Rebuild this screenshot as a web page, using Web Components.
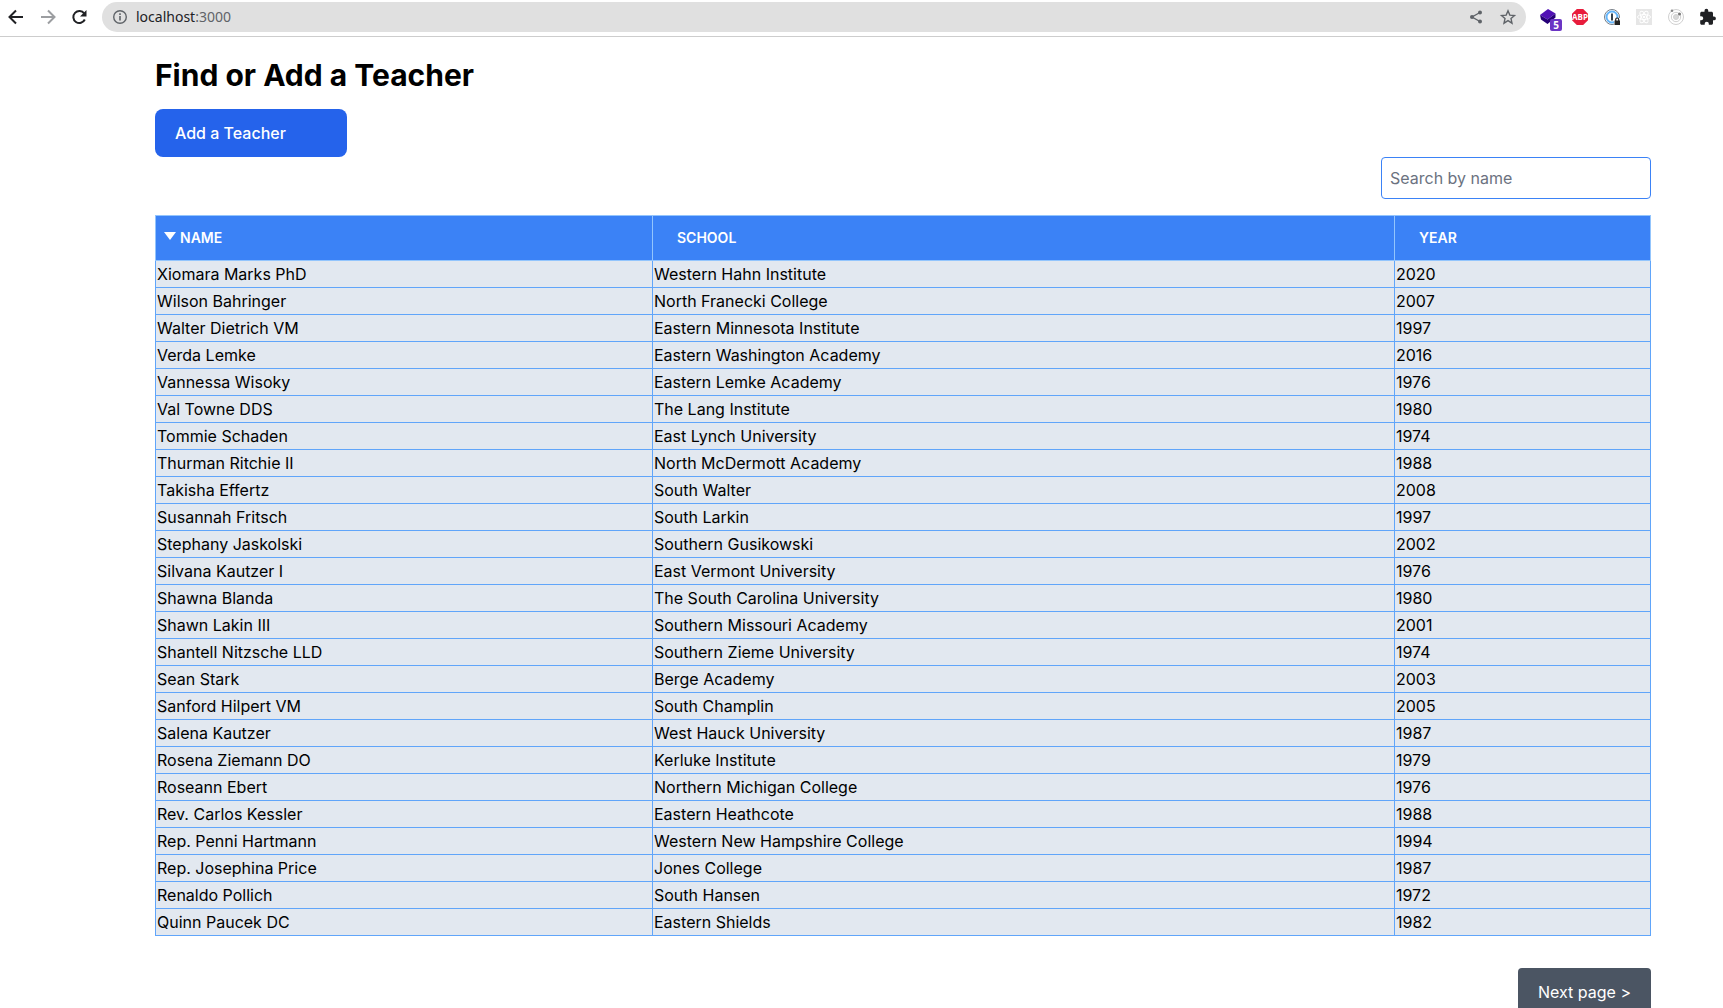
<!DOCTYPE html>
<html lang="en">
<head>
<meta charset="utf-8">
<title>Find or Add a Teacher</title>
<style>
html, body { margin: 0; height: 100%; }
body { font: 16px/24px Inter, "Liberation Sans", sans-serif; color: #000; background: #fff; overflow: hidden; }
</style>
</head>
<body>
<app-window>
  <browser-bar slot="bar" host="localhost" port=":3000"></browser-bar>
  <teacher-page heading="Find or Add a Teacher">
    <add-link slot="actions">Add a Teacher</add-link>
    <search-box slot="search"></search-box>
    <teacher-table></teacher-table>
    <next-button slot="footer">Next page &gt;</next-button>
  </teacher-page>
</app-window>
<script>
function define(name, html, setup) {
  const template = document.createElement('template');
  template.innerHTML = html;
  customElements.define(name, class extends HTMLElement {
    constructor() {
      super();
      this.attachShadow({ mode: 'open' }).append(template.content.cloneNode(true));
    }
    connectedCallback() { if (setup) setup(this, this.shadowRoot); }
  });
}

define('app-window', `
<style>
:host { display: flex; flex-direction: column; height: 100vh; }
main { flex: 1; min-height: 0; overflow: auto; scrollbar-width: none; }
</style>
<slot name="bar"></slot><main><slot></slot></main>`);

define('browser-bar', `
<style>
:host { display: flex; align-items: center; height: 37px; padding: 0 5px 2px 6px; box-sizing: border-box; border-bottom: 1px solid #cdcdcd; gap: 12px; }
button { display: block; border: 0; padding: 0; margin: 0; background: none; height: 20px; }
svg { display: block; width: 20px; height: 20px; }
nav, .extensions { display: flex; gap: 12px; }
.pill { flex: 1; display: flex; align-items: center; gap: 6px; height: 30px; border-radius: 15px; background: #e0e0e0; padding: 0 8px; }
.address { flex: 1; font: 14px/20px "Noto Sans", sans-serif; color: #202124; }
.address span { color: #5f6368; }
.tools { display: flex; gap: 12px; }
.counter { position: relative; }
.counter b { position: absolute; left: 12px; top: 12px; width: 12px; height: 12px; border-radius: 2px; background: #6b35c4; color: #fff; font: bold 10px/12px "Noto Sans", sans-serif; text-align: center; }
.abp b { display: grid; place-items: center; width: 16px; height: 16px; margin: 2px; background: #e81c3c; color: #fff; font: bold 8px/8px "Open Sans", sans-serif; clip-path: polygon(30% 0, 70% 0, 100% 30%, 100% 70%, 70% 100%, 30% 100%, 0 70%, 0 30%); }
</style>
<nav>
  <button aria-label="Back"><svg viewBox="0 0 20 20" fill="none" stroke="#202124" stroke-width="2"><path d="M17 10H4M10 3.5L3.5 10l6.5 6.500"/></svg></button>
  <button aria-label="Forward"><svg viewBox="0 0 20 20" fill="none" stroke="#9c9ea1" stroke-width="2"><path d="M3 10h13M10 3.500l6.500 6.500-6.500 6.500"/></svg></button>
  <button aria-label="Reload"><svg viewBox="0 0 20 20"><path d="M14.200 6.500a6 6 0 1 0 .6 6" fill="none" stroke="#202124" stroke-width="2"/><path d="M16.500 3v6.500H10z" fill="#202124"/></svg></button>
</nav>
<div class="pill">
  <button aria-label="Site information"><svg viewBox="0 0 20 20"><circle cx="10" cy="10" r="6.300" fill="none" stroke="#5f6368" stroke-width="1.400"/><path d="M9.200 9h1.600v4.500H9.200zM9.200 6.300h1.600v1.600H9.200z" fill="#5f6368"/></svg></button>
  <div class="address"></div>
  <div class="tools">
    <button aria-label="Share"><svg viewBox="0 0 20 20" fill="#5f6368"><path d="M14 5.500L6 10l8 4.500" fill="none" stroke="#5f6368" stroke-width="1.400"/><circle cx="14" cy="5.500" r="2"/><circle cx="6" cy="10" r="2"/><circle cx="14" cy="14.500" r="2"/></svg></button>
    <button aria-label="Bookmark"><svg viewBox="0 0 20 20"><path d="M10 3.800l1.800 4.300 4.700.4-3.500 3.100 1 4.600-4-2.500-4 2.500 1-4.600-3.500-3.100 4.700-.4z" fill="none" stroke="#5f6368" stroke-width="1.400"/></svg></button>
  </div>
</div>
<div class="extensions">
  <button class="counter" aria-label="Layers"><svg viewBox="0 0 20 20"><path d="M10 2l7.500 4.500-8 6L2 8z" fill="#5010b5"/><path d="M2 8l7.500 4.500 8-6v4l-8 6.500L3 12.500z" fill="#260078"/></svg><b>5</b></button>
  <button class="abp" aria-label="Ad blocker"><b>ABP</b></button>
  <button aria-label="Password manager"><svg viewBox="0 0 20 20"><circle cx="10" cy="10" r="7.500" fill="#fff" stroke="#777e87"/><circle cx="10" cy="10" r="5.500" fill="none" stroke="#64b5fa" stroke-width="2"/><path d="M9 6.500h2v7H9z" fill="#34424f"/><path d="M12 11h7v7h-7z" fill="#fff"/><path d="M12.500 13.500h5.500v4.500h-5.500z" fill="#222"/><path d="M13.700 14v-1.500a1.500 1.500 0 0 1 3 0V14" fill="none" stroke="#222" stroke-width="1.200"/></svg></button>
  <button aria-label="React tools"><svg viewBox="0 0 20 20"><path d="M2 2h16v16H2z" fill="#e6e6e6"/><g fill="none" stroke="#fff"><ellipse cx="10" cy="10" rx="6.500" ry="2.500"/><ellipse cx="10" cy="10" rx="6.500" ry="2.500" transform="rotate(60 10 10)"/><ellipse cx="10" cy="10" rx="6.500" ry="2.500" transform="rotate(120 10 10)"/></g><circle cx="10" cy="10" r="1.300" fill="#fff"/></svg></button>
  <button aria-label="Orbit tools"><svg viewBox="0 0 20 20" fill="none" stroke="#d0d0d0"><circle cx="10" cy="10" r="7.500"/><circle cx="10" cy="10" r="4.700"/><circle cx="10" cy="10" r="2.500" fill="#d8d8d8"/><circle cx="13.500" cy="7" r="1.500" fill="#777" stroke="none"/><circle cx="6" cy="3.700" r="1.300" fill="#888" stroke="none"/></svg></button>
  <button aria-label="Extensions"><svg viewBox="0 0 20 20"><path d="M16 9.500h-1V6.200c0-.8-.7-1.500-1.500-1.500h-3.200v-1a1.900 1.900 0 0 0-3.800 0v1H3.700c-.8 0-1.500.7-1.500 1.500v3h1a2 2 0 0 1 0 4.100h-1v3c0 .8.7 1.500 1.500 1.500h3v-1a2 2 0 0 1 4.100 0v1h2.700c.8 0 1.500-.7 1.500-1.500v-3h1a1.900 1.900 0 0 0 0-3.800z" fill="#202124"/></svg></button>
</div>`, (el, root) => {
  const port = document.createElement('span');
  port.textContent = el.getAttribute('port');
  root.querySelector('.address').replaceChildren(el.getAttribute('host'), port);
});

define('teacher-page', `
<style>
:host { display: flex; flex-direction: column; padding: 20px 72px 24px 155px; }
h1 { margin: 0 0 16px; font-size: 30px; line-height: 36px; font-weight: 700; }
.actions { display: flex; }
.search, .footer { display: flex; justify-content: flex-end; }
.search { margin-bottom: 16px; }
.footer { margin-top: 32px; }
</style>
<h1></h1>
<div class="actions"><slot name="actions"></slot></div>
<div class="search"><slot name="search"></slot></div>
<slot></slot>
<div class="footer"><slot name="footer"></slot></div>`, (el, root) => {
  root.querySelector('h1').textContent = el.getAttribute('heading');
});

define('add-link', `
<style>
:host { display: block; width: 192px; }
a { display: block; padding: 12px 20px; border-radius: 8px; background: #2563eb; color: #fff; font-weight: 500; text-decoration: none; }
</style><a href="#new"><slot></slot></a>`);

define('search-box', `
<style>
:host { display: block; width: 270px; }
input { display: block; box-sizing: border-box; width: 100%; margin: 0; padding: 8px; border: 1px solid #3b82f6; border-radius: 4px; font: inherit; line-height: 24px; height: 42px; background: #fff; }
input::placeholder { color: #6b7280; opacity: 1; }
</style><input type="text" placeholder="Search by name" aria-label="Search by name">`);

define('next-button', `
<style>
:host { display: block; }
button { display: block; border: 0; margin: 0; padding: 12px 20px; border-radius: 4px; background: #4b5563; color: #fff; font: inherit; }
</style><button><slot></slot></button>`);

define('teacher-table', `
<style>
:host { display: block; }
table { width: 100%; table-layout: fixed; border-collapse: collapse; background: #e2e8f0; }
.name { width: 497px; } .year { width: 256px; }
th { padding: 12px 24px; border: 1px solid #93c5fd; background: #3b82f6; text-align: left; }
th:first-child { padding-left: 8px; }
th button { display: flex; gap: 4px; border: 0; padding: 0; margin: 0; background: none; color: #fff; font: inherit; font-size: 14px; line-height: 20px; font-weight: 600; text-transform: uppercase; }
svg { display: block; width: 12px; height: 20px; }
td { padding: 1px; border: 1px solid #60a5fa; }
</style>
<table>
  <colgroup><col class="name"><col><col class="year"></colgroup>
  <thead><tr>
    <th aria-sort="descending"><button><svg viewBox="0 0 12 20" aria-hidden="true"><path d="M0 4h12L6 12z" fill="#fff"/></svg>Name</button></th>
    <th><button>School</button></th>
    <th><button>Year</button></th>
  </tr></thead>
  <tbody></tbody>
</table>`, (el, root) => {
  const teachers = [
    ['Xiomara Marks PhD', 'Western Hahn Institute', 2020],
    ['Wilson Bahringer', 'North Franecki College', 2007],
    ['Walter Dietrich VM', 'Eastern Minnesota Institute', 1997],
    ['Verda Lemke', 'Eastern Washington Academy', 2016],
    ['Vannessa Wisoky', 'Eastern Lemke Academy', 1976],
    ['Val Towne DDS', 'The Lang Institute', 1980],
    ['Tommie Schaden', 'East Lynch University', 1974],
    ['Thurman Ritchie II', 'North McDermott Academy', 1988],
    ['Takisha Effertz', 'South Walter', 2008],
    ['Susannah Fritsch', 'South Larkin', 1997],
    ['Stephany Jaskolski', 'Southern Gusikowski', 2002],
    ['Silvana Kautzer I', 'East Vermont University', 1976],
    ['Shawna Blanda', 'The South Carolina University', 1980],
    ['Shawn Lakin III', 'Southern Missouri Academy', 2001],
    ['Shantell Nitzsche LLD', 'Southern Zieme University', 1974],
    ['Sean Stark', 'Berge Academy', 2003],
    ['Sanford Hilpert VM', 'South Champlin', 2005],
    ['Salena Kautzer', 'West Hauck University', 1987],
    ['Rosena Ziemann DO', 'Kerluke Institute', 1979],
    ['Roseann Ebert', 'Northern Michigan College', 1976],
    ['Rev. Carlos Kessler', 'Eastern Heathcote', 1988],
    ['Rep. Penni Hartmann', 'Western New Hampshire College', 1994],
    ['Rep. Josephina Price', 'Jones College', 1987],
    ['Renaldo Pollich', 'South Hansen', 1972],
    ['Quinn Paucek DC', 'Eastern Shields', 1982]
  ];
  root.querySelector('tbody').replaceChildren(...teachers.map(teacher => {
    const row = document.createElement('tr');
    for (const value of teacher) row.insertCell().textContent = value;
    return row;
  }));
});
</script>
</body>
</html>
